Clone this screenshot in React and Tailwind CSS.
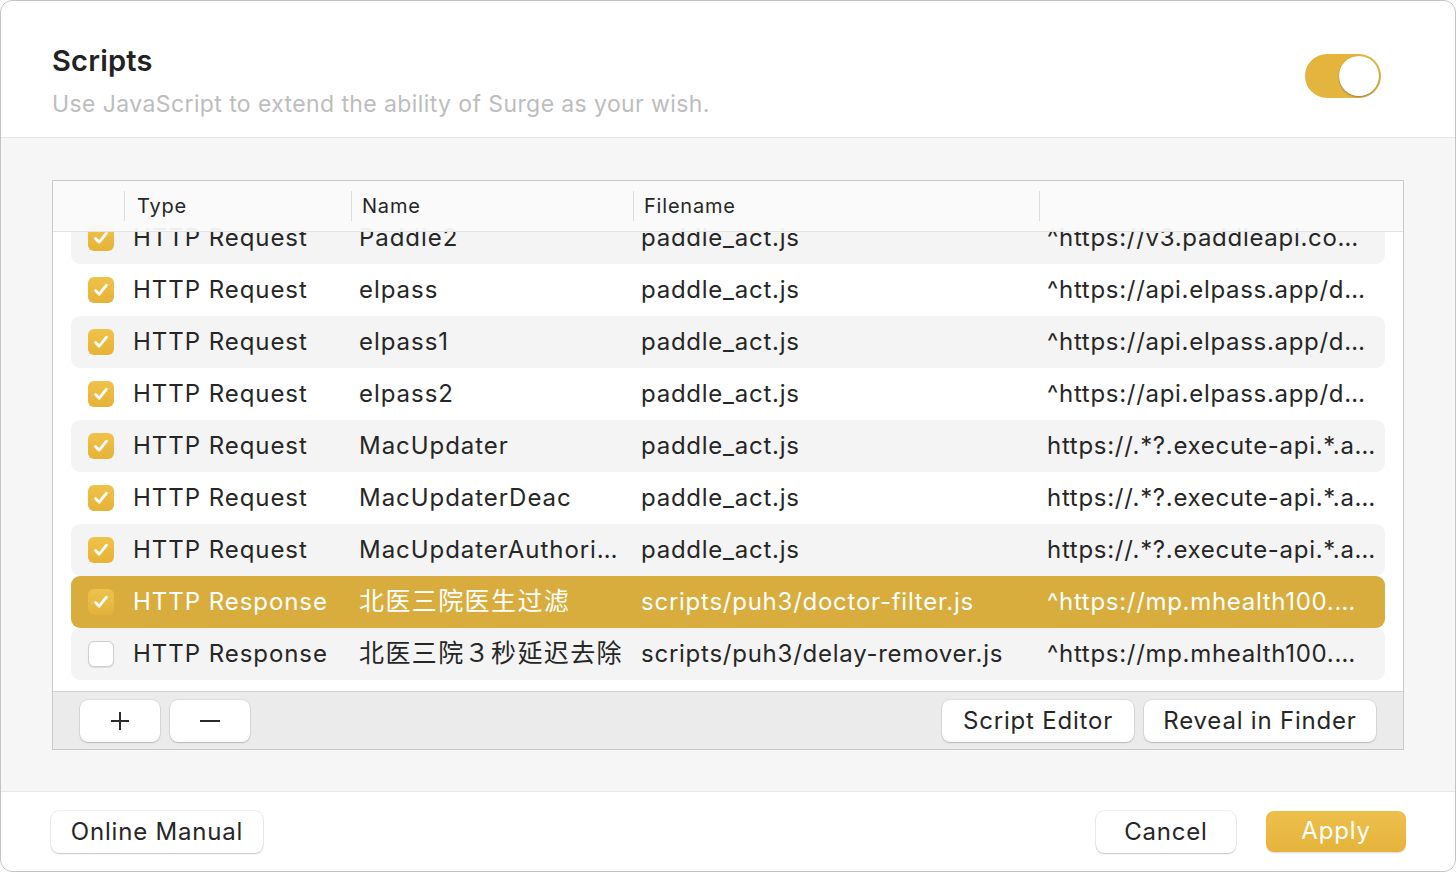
import React from "react";

const rows = [
  { on: true, type: "HTTP Request", name: "Paddle2", file: "paddle_act.js", url: "^https://v3.paddleapi.co…" },
  { on: true, type: "HTTP Request", name: "elpass", file: "paddle_act.js", url: "^https://api.elpass.app/d…" },
  { on: true, type: "HTTP Request", name: "elpass1", file: "paddle_act.js", url: "^https://api.elpass.app/d…" },
  { on: true, type: "HTTP Request", name: "elpass2", file: "paddle_act.js", url: "^https://api.elpass.app/d…" },
  { on: true, type: "HTTP Request", name: "MacUpdater", file: "paddle_act.js", url: "https://.*?.execute-api.*.a…" },
  { on: true, type: "HTTP Request", name: "MacUpdaterDeac", file: "paddle_act.js", url: "https://.*?.execute-api.*.a…" },
  { on: true, type: "HTTP Request", name: "MacUpdaterAuthori…", file: "paddle_act.js", url: "https://.*?.execute-api.*.a…" },
  { on: true, type: "HTTP Response", name: "北医三院医生过滤", cjk: true, file: "scripts/puh3/doctor-filter.js", url: "^https://mp.mhealth100.…", sel: true },
  { on: false, type: "HTTP Response", name: "北医三院３秒延迟去除", cjk: true, file: "scripts/puh3/delay-remover.js", url: "^https://mp.mhealth100.…" },
];

const font = { fontFamily: "Inter, 'Noto Sans CJK SC', 'Liberation Sans', sans-serif" };

function Check({ on, sel }) {
  if (!on)
    return (
      <div className="w-[26px] h-[26px] rounded-[6px] bg-white border border-[#cfcfcf] shadow-[0_0.5px_1px_rgba(0,0,0,0.1)]" />
    );
  return (
    <div
      className={
        "w-[26px] h-[26px] rounded-[6px] flex items-center justify-center " +
        (sel ? "bg-gradient-to-b from-[#eec24d] to-[#e3b23a]" : "bg-gradient-to-b from-[#f0c24a] to-[#e6b237]")
      }
    >
      <svg width="18" height="18" viewBox="0 0 18 18" fill="none">
        <path d="M3.5 9.5 L7.2 13.2 L14.5 4.2" stroke="white" strokeWidth="2.8" strokeLinecap="round" strokeLinejoin="round" />
      </svg>
    </div>
  );
}

function Btn({ children, className = "" }) {
  return (
    <button
      className={
        "h-[42px] rounded-[8px] bg-white text-[#262626] text-[24px] tracking-[0.8px] leading-none flex items-center justify-center shadow-[0_0_0_0.5px_rgba(0,0,0,0.12),0_1px_1.5px_rgba(0,0,0,0.18)] " +
        className
      }
      style={font}
    >
      {children}
    </button>
  );
}

export default function App() {
  return (
    <div className="w-[1456px] h-[872px] bg-white" style={font}>
      <div className="w-[1456px] h-[872px] rounded-[12px] border border-[#c4c4c4] bg-white overflow-hidden flex flex-col">
        {/* Header */}
        <div className="h-[136px] shrink-0 flex items-start justify-between pl-[51px] pr-[74px]">
          <div className="pt-[42px]">
            <div className="text-[29px] leading-[36px] font-semibold text-[#222] tracking-[0.2px]">Scripts</div>
            <div className="mt-[11px] text-[23px] leading-[28px] tracking-[0.4px] text-[#bdbdbd]">
              Use JavaScript to extend the ability of Surge as your wish.
            </div>
          </div>
          <div className="mt-[53px] w-[76px] h-[44px] rounded-full bg-gradient-to-b from-[#e5b33a] to-[#e3b641] relative">
            <div className="absolute right-[2px] top-[2px] w-[40px] h-[40px] rounded-full bg-white shadow-[0_1px_2px_rgba(0,0,0,0.3)]" />
          </div>
        </div>

        {/* Middle */}
        <div className="h-[655px] shrink-0 bg-[#f6f6f6] border-t border-b border-[#e6e6e6] pt-[42px] px-[51px]">
          <div className="w-[1352px] h-[570px] border border-[#c9c9c9] bg-white flex flex-col">
            <div className="relative h-[510px] overflow-hidden">
              <div className="pt-[31px] px-[18px] flex flex-col">
                {rows.map((r, i) => {
                  const striped = i % 2 === 0;
                  const bg = r.sel ? "bg-[#d9ad3d] text-white" : striped ? "bg-[#f4f4f4] text-[#262626]" : "bg-white text-[#262626]";
                  return (
                    <div key={i} className={"h-[52px] rounded-[9px] flex items-center text-[24px] tracking-[0.95px] " + bg}>
                      <div className="w-[62px] pl-[17px] shrink-0">
                        <Check on={r.on} sel={r.sel} />
                      </div>
                      <div className="w-[226px] shrink-0 whitespace-nowrap">{r.type}</div>
                      <div className="w-[282px] shrink-0 whitespace-nowrap">
                        {r.cjk ? <span className="text-[25px] tracking-[1.4px]">{r.name}</span> : r.name}
                      </div>
                      <div className="w-[406px] shrink-0 whitespace-nowrap tracking-[0.75px]">{r.file}</div>
                      <div className="flex-1 whitespace-nowrap tracking-[0.7px]">{r.url}</div>
                    </div>
                  );
                })}
              </div>
              {/* Table header overlay */}
              <div className="absolute left-0 top-0 right-0 h-[51px] bg-[#fafafa]/95 border-b border-[#e3e3e3] flex items-center text-[20px] tracking-[0.8px] text-[#262626]">
                <div className="w-[72px] h-[30px] shrink-0 border-r border-[#dcdcdc]" />
                <div className="w-[227px] shrink-0 pl-[12px] h-[30px] flex items-center border-r border-[#dcdcdc]">Type</div>
                <div className="w-[282px] shrink-0 pl-[10px] h-[30px] flex items-center border-r border-[#dcdcdc]">Name</div>
                <div className="w-[406px] shrink-0 pl-[10px] h-[30px] flex items-center border-r border-[#dcdcdc]">Filename</div>
                <div className="flex-1" />
              </div>
            </div>
            <div className="flex-1 bg-[#ebebeb] border-t border-[#d3d3d3] flex items-center justify-between px-[27px]">
              <div className="flex gap-[10px]">
                <Btn className="w-[80px]">
                  <svg width="22" height="22" viewBox="0 0 22 22"><path d="M11 2V20M2 11H20" stroke="#2a2a2a" strokeWidth="2" /></svg>
                </Btn>
                <Btn className="w-[80px]">
                  <svg width="22" height="22" viewBox="0 0 22 22"><path d="M1 11H21" stroke="#2a2a2a" strokeWidth="2" /></svg>
                </Btn>
              </div>
              <div className="flex gap-[10px]">
                <Btn className="w-[192px]">Script Editor</Btn>
                <Btn className="w-[232px]">Reveal in Finder</Btn>
              </div>
            </div>
          </div>
        </div>

        {/* Footer */}
        <div className="flex-1 flex items-center justify-between pl-[50px] pr-[49px]">
          <Btn className="w-[212px] h-[41px]">Online Manual</Btn>
          <div className="flex gap-[30px]">
            <Btn className="w-[140px] h-[41px]">Cancel</Btn>
            <button
              className="w-[140px] h-[41px] rounded-[8px] bg-gradient-to-b from-[#edc04c] to-[#e5b33a] text-white text-[24px] tracking-[0.8px] leading-none flex items-center justify-center shadow-[0_1px_1.5px_rgba(0,0,0,0.15)]"
              style={font}
            >
              Apply
            </button>
          </div>
        </div>
      </div>
    </div>
  );
}
